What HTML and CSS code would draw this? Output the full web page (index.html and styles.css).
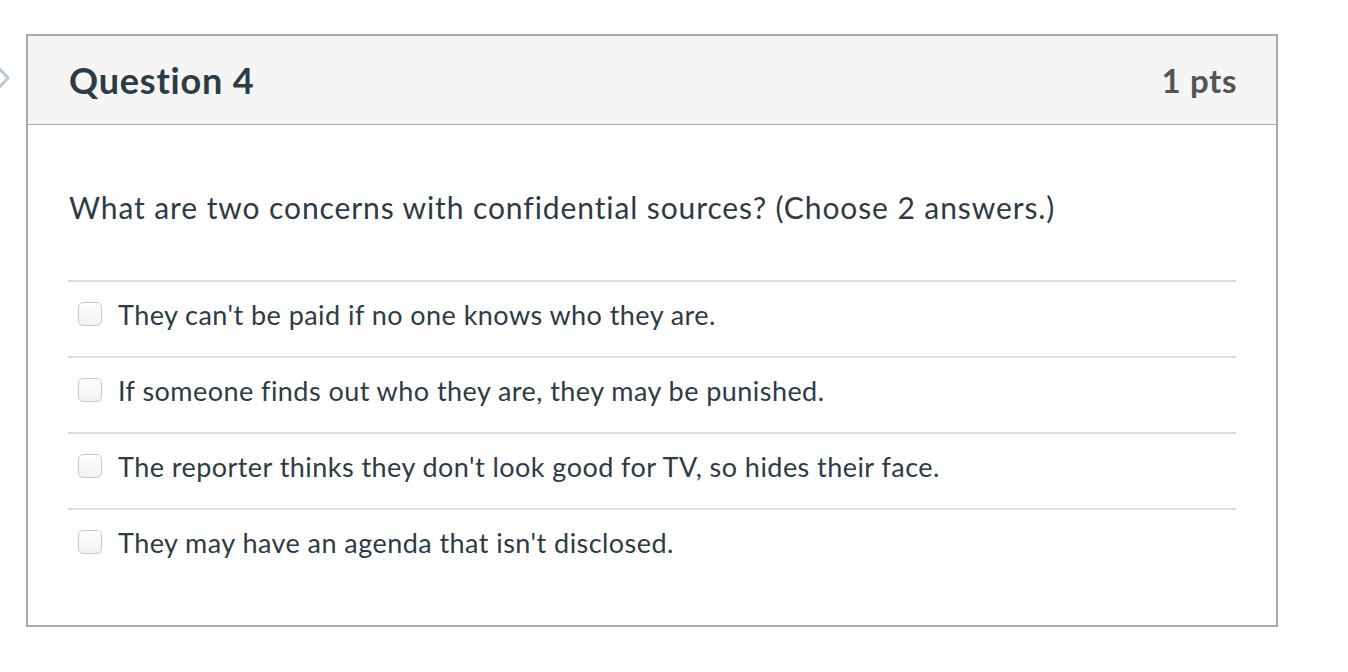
FILE: index.html
```html
<!DOCTYPE html>
<html>
<head>
<meta charset="utf-8">
<link rel="stylesheet" href="styles.css">
</head>
<body>
<div class="page">
  <svg class="flag" width="12" height="40" viewBox="0 0 12 40"><path d="M-6 3 L8 18 L-6 33" fill="none" stroke="#b7c9d6" stroke-width="3" stroke-linejoin="round"/></svg>
  <div class="question">
    <div class="header">
      <h2 class="title">Question 4</h2>
      <div class="pts">1 pts</div>
    </div>
    <div class="content">
      <p class="prompt">What are two concerns with confidential sources? (Choose 2 answers.)</p>
      <div class="answers">
        <label class="answer"><span class="box"></span><span class="text">They can't be paid if no one knows who they are.</span></label>
        <label class="answer"><span class="box"></span><span class="text">If someone finds out who they are, they may be punished.</span></label>
        <label class="answer"><span class="box"></span><span class="text">The reporter thinks they don't look good for TV, so hides their face.</span></label>
        <label class="answer"><span class="box"></span><span class="text">They may have an agenda that isn't disclosed.</span></label>
      </div>
    </div>
  </div>
</div>
</body>
</html>
```
FILE: styles.css
```css
html, body {
  margin: 0;
  padding: 0;
  background: #fff;
}
body {
  font-family: Lato, "Noto Sans", sans-serif;
  color: #2d3b45;
}
.page {
  position: relative;
  padding: 34px 0 0 26px;
}
.flag {
  position: absolute;
  left: 0;
  top: 60px;
}
.question {
  width: 1248px;
  border: 2px solid #aaaaaa;
  background: #fff;
}
.header {
  height: 88px;
  background: #f5f5f5;
  border-bottom: 1px solid #aaaaaa;
  display: flex;
  align-items: center;
  justify-content: space-between;
  padding: 0 39px 0 41px;
}
.title {
  margin: 0;
  font-size: 36px;
  letter-spacing: 0.8px;
  font-weight: 700;
  color: #2d3b45;
}
.pts {
  font-size: 33px;
  letter-spacing: 0.6px;
  font-weight: 700;
  color: #555;
}
.content {
  padding: 0 40px 41px 40px;
}
.prompt {
  margin: 0;
  padding: 62px 0 53px 1px;
  font-size: 30px;
  letter-spacing: 0.9px;
  line-height: 40px;
}
.answer {
  display: flex;
  align-items: center;
  gap: 16px;
  height: 64px;
  padding-bottom: 10px;
  border-top: 2px solid #dddddd;
  padding-left: 10px;
}
.box {
  width: 22px;
  height: 22px;
  border: 1px solid #c8c8c8;
  border-radius: 5px;
  background: linear-gradient(#ffffff, #f2f2f2);
  flex: none;
}
.text {
  font-size: 27px;
  letter-spacing: 0.45px;
}
```
